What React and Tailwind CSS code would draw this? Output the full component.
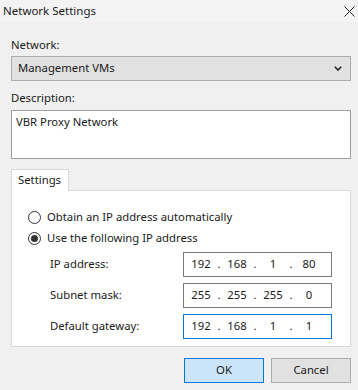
import { useState } from 'react';

function IpBox({ parts, focused }) {
  return (
    <div
      className={`flex items-center w-[149px] h-[25px] bg-white border ${
        focused ? 'border-[#0078d7]' : 'border-[#7a7a7a]'
      } pl-[2px]`}
    >
      {parts.map((p, i) => (
        <div key={i} className="flex items-center">
          <span className="w-[30px] text-center">{p}</span>
          {i < 3 && <span className="w-[6px] text-center">.</span>}
        </div>
      ))}
    </div>
  );
}

function Radio({ checked, label, onClick }) {
  return (
    <div className="flex items-center h-[20px] cursor-default" onClick={onClick}>
      <span className="w-[13px] h-[13px] rounded-full border border-[#333] bg-white flex items-center justify-center">
        {checked && <span className="w-[7px] h-[7px] rounded-full bg-[#333]" />}
      </span>
      <span className="ml-[6px]">{label}</span>
    </div>
  );
}

export default function App() {
  const [mode, setMode] = useState('manual');

  return (
    <div
      className="w-[358px] h-[390px] bg-[#f0f0f0] text-[11.3px] text-[#1a1a1a] flex flex-col overflow-hidden"
      style={{ fontFamily: '"Noto Sans", "Open Sans", sans-serif' }}
    >
      {/* title bar */}
      <div className="h-[22px] flex items-center justify-between pl-[3px] pr-[3px] bg-[#f3f3f3]">
        <span className="text-[11.5px]">Network Settings</span>
        <svg width="11" height="11" viewBox="0 0 11 11" className="text-[#222]">
          <path d="M0.5 0.5 L10.5 10.5 M10.5 0.5 L0.5 10.5" stroke="currentColor" strokeWidth="1" />
        </svg>
      </div>

      <div className="flex flex-col pl-[11px] pr-[7px]">
        <label className="mt-[15px] leading-[16px]">Network:</label>
        <div className="mt-[3px] h-[25px] flex items-center justify-between bg-[#e1e1e1] border border-[#adadad] pl-[6px] pr-[8px]">
          <span>Management VMs</span>
          <svg width="8" height="5" viewBox="0 0 8 5">
            <path d="M0.8 0.8 L4 4 L7.2 0.8" fill="none" stroke="#222" strokeWidth="1.6" />
          </svg>
        </div>

        <label className="mt-[9px] leading-[16px]">Description:</label>
        <div className="mt-[4px] h-[49px] bg-white border border-[#a0a0a0] px-[4px] pt-[3px]">
          VBR Proxy Network
        </div>

        {/* tab */}
        <div className="mt-[10px] flex">
          <div className="relative z-10 h-[22px] w-[58px] bg-white border border-b-0 border-[#d9d9d9] flex items-center pl-[6px]">
            Settings
          </div>
        </div>
        <div className="-mt-px h-[157px] bg-white border border-[#d9d9d9] flex flex-col pl-[16px] pt-[16px]">
          <Radio
            checked={mode === 'auto'}
            label="Obtain an IP address automatically"
            onClick={() => setMode('auto')}
          />
          <div className="mt-[1px]">
            <Radio
              checked={mode === 'manual'}
              label="Use the following IP address"
              onClick={() => setMode('manual')}
            />
          </div>

          <div className="mt-[4px] flex flex-col gap-[6px] pl-[22px]">
            <div className="flex items-center">
              <span className="w-[133px]">IP address:</span>
              <IpBox parts={['192', '168', '1', '80']} />
            </div>
            <div className="flex items-center">
              <span className="w-[133px]">Subnet mask:</span>
              <IpBox parts={['255', '255', '255', '0']} />
            </div>
            <div className="flex items-center">
              <span className="w-[133px]">Default gateway:</span>
              <IpBox parts={['192', '168', '1', '1']} focused />
            </div>
          </div>
        </div>

        {/* buttons */}
        <div className="mt-[11px] flex justify-end gap-[7px]">
          <button className="w-[80px] h-[25px] bg-[#cce4f7] border border-[#0078d7]">
            OK
          </button>
          <button className="w-[80px] h-[25px] bg-[#e1e1e1] border border-[#adadad]">
            Cancel
          </button>
        </div>
      </div>
    </div>
  );
}
